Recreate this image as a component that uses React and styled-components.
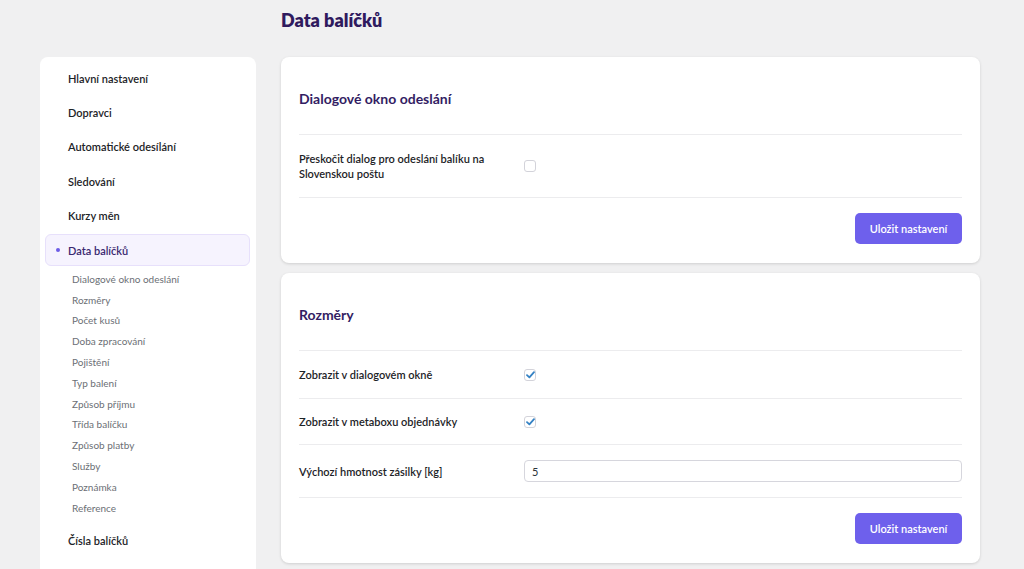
import styled, { createGlobalStyle } from "styled-components";

const GlobalStyle = createGlobalStyle`
  * { box-sizing: border-box; }
  body {
    margin: 0;
    background: #f0f0f1;
    font-family: Lato, "Noto Sans", sans-serif;
    color: #1d2327;
  }
`;

const Page = styled.div`
  display: grid;
  grid-template-columns: 216px 699px;
  grid-template-rows: 57px auto;
  column-gap: 25px;
  padding-left: 40px;
  min-height: 569px;
`;

const Title = styled.h1`
  grid-column: 2;
  grid-row: 1;
  margin: 0;
  padding-top: 8px;
  font-size: 18px;
  line-height: 24px;
  font-weight: 800;
  color: #2f1a5e;
`;

const Sidebar = styled.nav`
  grid-column: 1;
  grid-row: 2;
  background: #fff;
  border-radius: 8px 8px 0 0;
  padding: 5px 6px 20px 5px;
  display: flex;
  flex-direction: column;
  gap: 2px;
`;

const NavItem = styled.div`
  position: relative;
  height: 32.4px;
  display: flex;
  align-items: center;
  padding-left: 22px;
  border: 1px solid ${(p) => (p.$active ? "#e7e0fb" : "transparent")};
  border-radius: 6px;
  background: ${(p) => (p.$active ? "#f6f3fe" : "transparent")};
  font-size: 11px;
  font-weight: 600;
  color: ${(p) => (p.$active ? "#3a2870" : "#1d2327")};

  ${(p) =>
    p.$active &&
    `
    &::before {
      content: "";
      position: absolute;
      left: 10px;
      top: 50%;
      width: 4px;
      height: 4px;
      margin-top: -2px;
      border-radius: 50%;
      background: #6c5ce7;
    }
  `}
`;

const SubList = styled.div`
  display: flex;
  flex-direction: column;
  padding-left: 27px;
  margin-bottom: 4px;
`;

const SubItem = styled.div`
  height: 20.8px;
  display: flex;
  align-items: center;
  font-size: 10px;
  color: #6b6f75;
`;

const Main = styled.main`
  grid-column: 2;
  grid-row: 2;
  display: flex;
  flex-direction: column;
  gap: 10px;
`;

const Card = styled.section`
  background: #fff;
  border-radius: 8px;
  box-shadow: 0 1px 3px rgba(0, 0, 0, 0.14);
  padding: 0 18px;
`;

const CardHeader = styled.div`
  padding: 33px 0 26px;
  border-bottom: 1px solid #ececee;
`;

const CardTitle = styled.h2`
  margin: 0;
  font-size: 14px;
  line-height: 18px;
  font-weight: 700;
  color: #331d63;
`;

const Row = styled.div`
  display: grid;
  grid-template-columns: 225px 1fr;
  align-items: center;
  padding: ${(p) => p.$pad || "16px"} 0;
  border-bottom: 1px solid #ececee;
`;

const Label = styled.div`
  font-size: 11px;
  line-height: 15px;
  font-weight: 600;
  color: #1d2327;
  max-width: 205px;
`;

const Box = styled.span`
  width: 12px;
  height: 12px;
  border: 1px solid #d3d3da;
  border-radius: 3px;
  background: #fff;
  display: flex;
  align-items: center;
  justify-content: center;
`;

const TextInput = styled.input`
  width: 100%;
  height: 22px;
  border: 1px solid #d6d6dd;
  border-radius: 4px;
  padding: 0 7px;
  font-family: inherit;
  font-size: 11px;
  color: #2c3338;
  outline: none;
`;

const CardFooter = styled.div`
  display: flex;
  justify-content: flex-end;
  padding: 15px 0 19px;
`;

const SaveButton = styled.button`
  height: 31px;
  width: 107px;
  border: none;
  border-radius: 5px;
  background: #6e60ec;
  color: #fff;
  font-family: inherit;
  font-size: 11px;
  font-weight: 600;
  cursor: pointer;
`;

const Checkbox = ({ checked }) => (
  <Box>
    {checked && (
      <svg width="9" height="8" viewBox="0 0 9 8">
        <path
          d="M1 4.2 L3.4 6.4 L8 1.2"
          fill="none"
          stroke="#3582c4"
          strokeWidth="1.8"
          strokeLinecap="round"
          strokeLinejoin="round"
        />
      </svg>
    )}
  </Box>
);

const subItems = [
  "Dialogové okno odeslání",
  "Rozměry",
  "Počet kusů",
  "Doba zpracování",
  "Pojištění",
  "Typ balení",
  "Způsob příjmu",
  "Třída balíčku",
  "Způsob platby",
  "Služby",
  "Poznámka",
  "Reference",
];

export default function App() {
  return (
    <>
      <GlobalStyle />
      <Page>
        <Title>Data balíčků</Title>
        <Sidebar>
          <NavItem>Hlavní nastavení</NavItem>
          <NavItem>Dopravci</NavItem>
          <NavItem>Automatické odesílání</NavItem>
          <NavItem>Sledování</NavItem>
          <NavItem>Kurzy měn</NavItem>
          <NavItem $active>Data balíčků</NavItem>
          <SubList>
            {subItems.map((s) => (
              <SubItem key={s}>{s}</SubItem>
            ))}
          </SubList>
          <NavItem>Čísla balíčků</NavItem>
        </Sidebar>
        <Main>
          <Card>
            <CardHeader>
              <CardTitle>Dialogové okno odeslání</CardTitle>
            </CardHeader>
            <Row>
              <Label>Přeskočit dialog pro odeslání balíku na Slovenskou poštu</Label>
              <Checkbox />
            </Row>
            <CardFooter>
              <SaveButton>Uložit nastavení</SaveButton>
            </CardFooter>
          </Card>
          <Card>
            <CardHeader>
              <CardTitle>Rozměry</CardTitle>
            </CardHeader>
            <Row>
              <Label>Zobrazit v dialogovém okně</Label>
              <Checkbox checked />
            </Row>
            <Row $pad="15px">
              <Label>Zobrazit v metaboxu objednávky</Label>
              <Checkbox checked />
            </Row>
            <Row $pad="15px">
              <Label>Výchozí hmotnost zásilky [kg]</Label>
              <TextInput defaultValue="5" />
            </Row>
            <CardFooter>
              <SaveButton>Uložit nastavení</SaveButton>
            </CardFooter>
          </Card>
        </Main>
      </Page>
    </>
  );
}
